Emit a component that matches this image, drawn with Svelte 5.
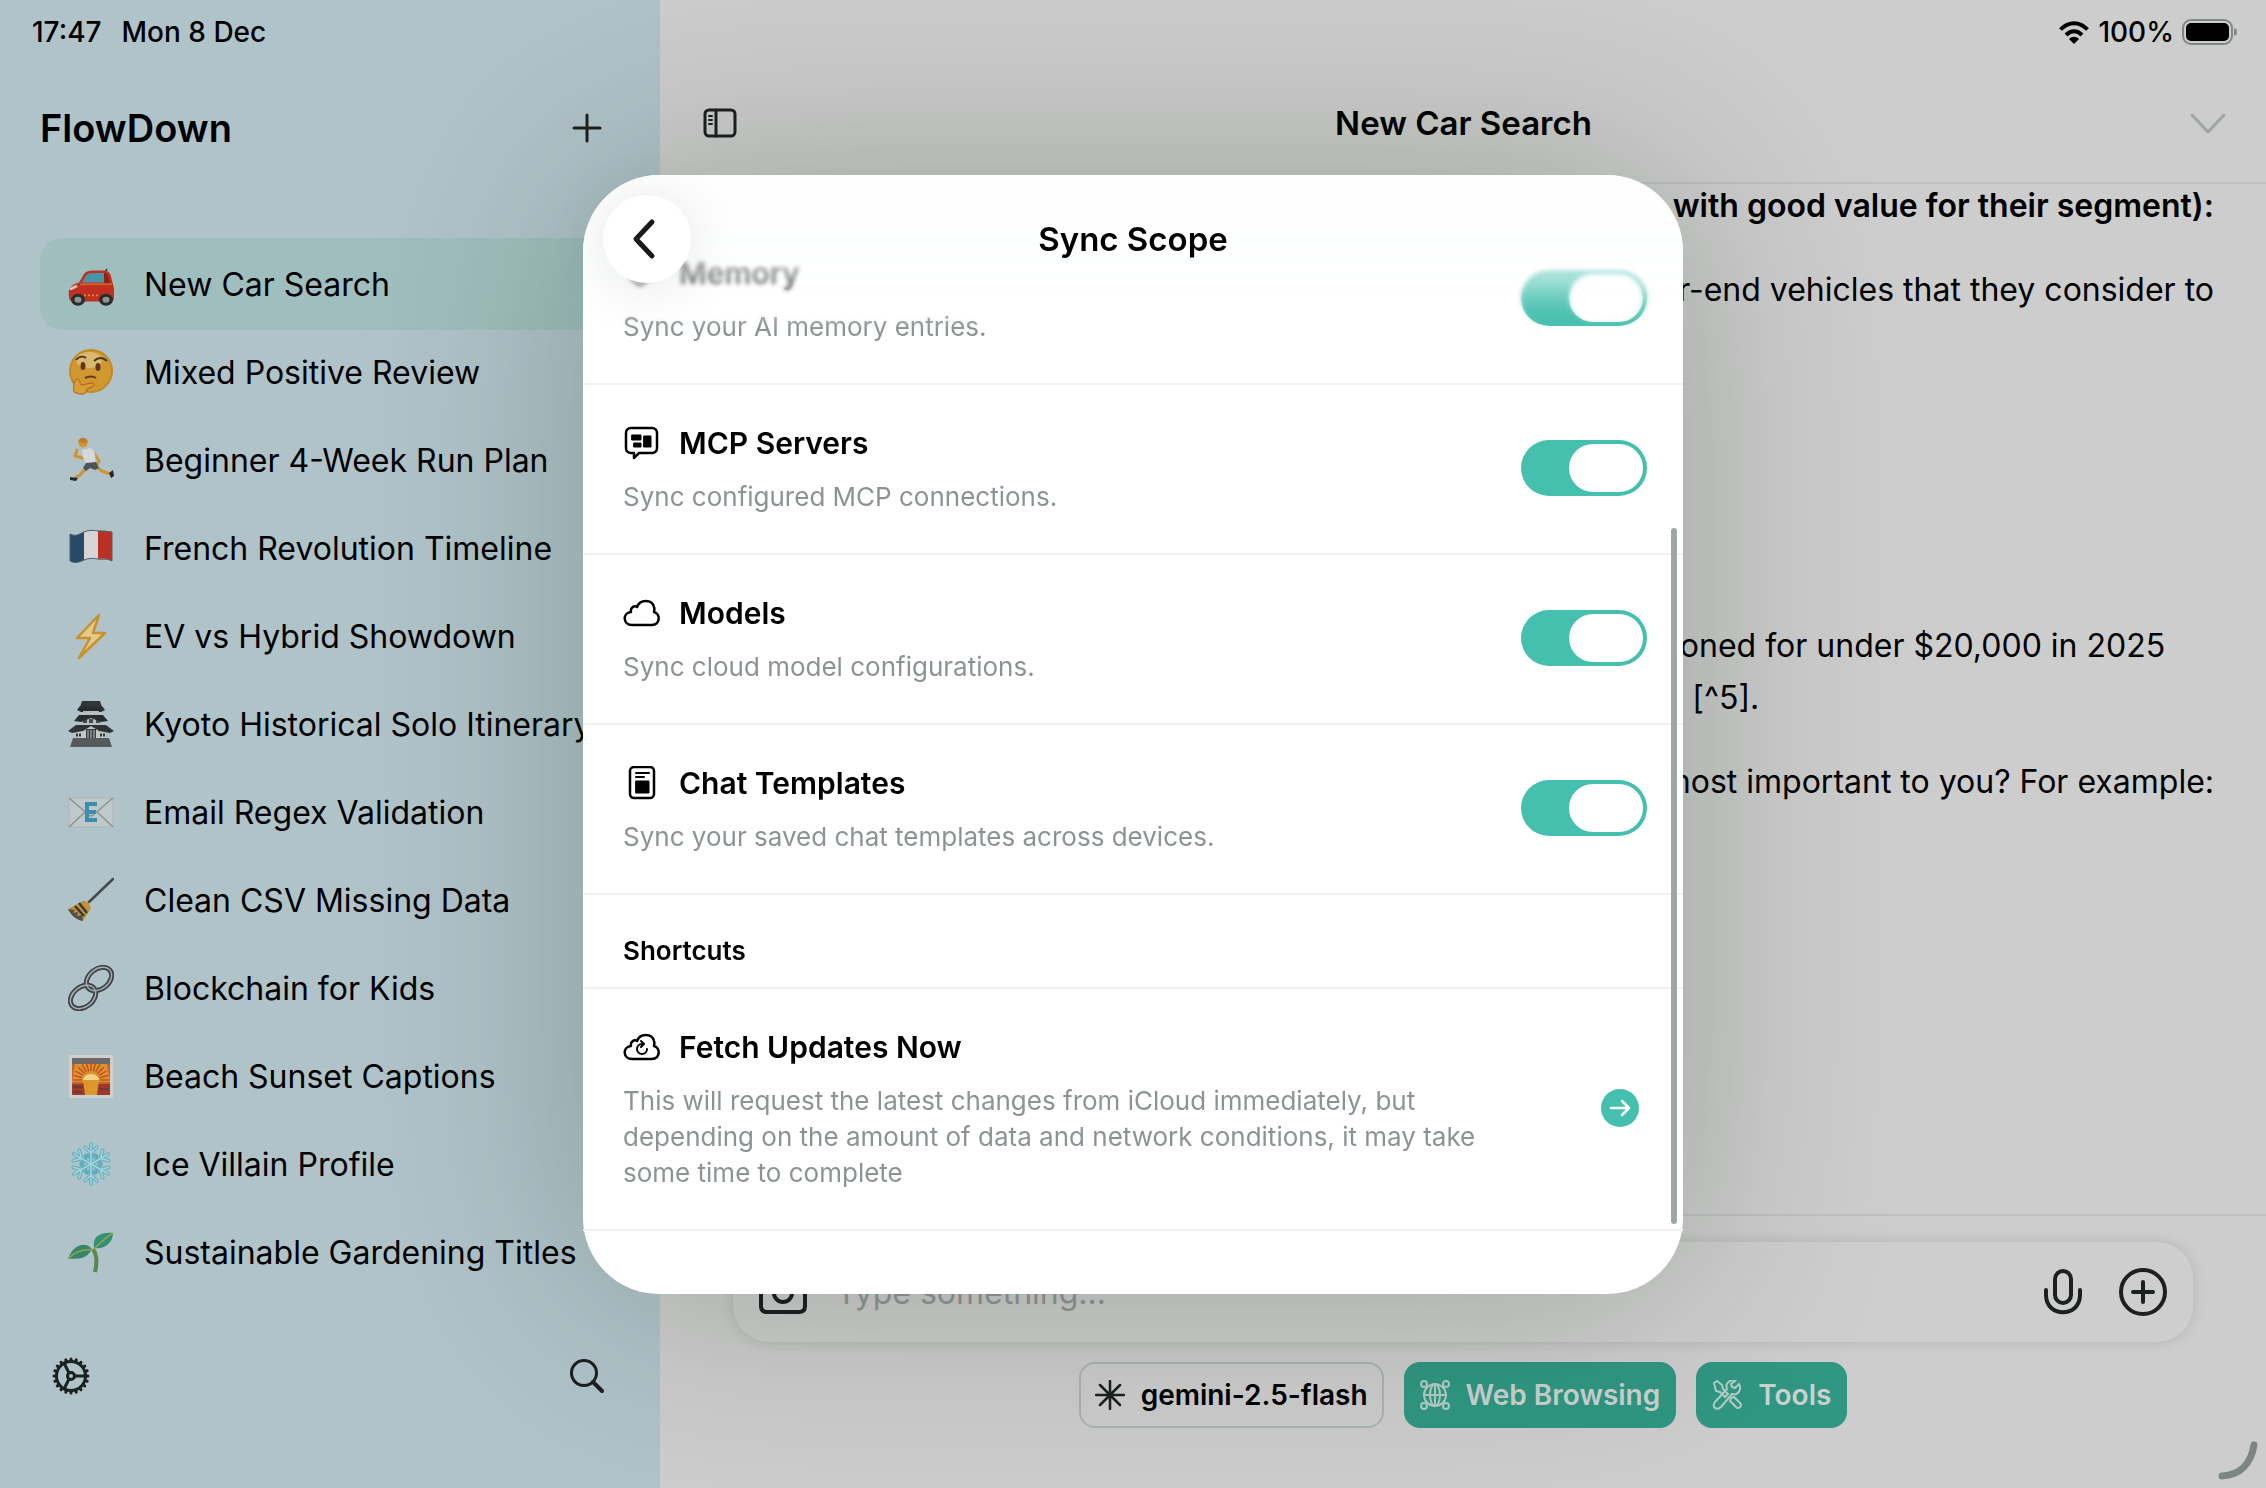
<script>
	// Data
	const chats = [
		{ icon: 'car', title: 'New Car Search' },
		{ icon: 'think', title: 'Mixed Positive Review' },
		{ icon: 'run', title: 'Beginner 4-Week Run Plan' },
		{ icon: 'flag', title: 'French Revolution Timeline' },
		{ icon: 'bolt', title: 'EV vs Hybrid Showdown' },
		{ icon: 'castle', title: 'Kyoto Historical Solo Itinerary' },
		{ icon: 'email', title: 'Email Regex Validation' },
		{ icon: 'broom', title: 'Clean CSV Missing Data' },
		{ icon: 'chain', title: 'Blockchain for Kids' },
		{ icon: 'sunset', title: 'Beach Sunset Captions' },
		{ icon: 'snow', title: 'Ice Villain Profile' },
		{ icon: 'plant', title: 'Sustainable Gardening Titles' }
	]

	let selected = $state(0)

	let scopes = $state([
		{ id: 'memory', title: 'Memory', text: 'Sync your AI memory entries.', on: true },
		{ id: 'mcp', title: 'MCP Servers', text: 'Sync configured MCP connections.', on: true },
		{ id: 'models', title: 'Models', text: 'Sync cloud model configurations.', on: true },
		{ id: 'templates', title: 'Chat Templates', text: 'Sync your saved chat templates across devices.', on: true }
	])

	const spokes = [0, 60, 120, 180, 240, 300]
	const teeth = Array.from({ length: 20 }, (_, i) => i * 18)
	const rays = Array.from({ length: 13 }, (_, i) => i * 15 - 90)
</script>

{#snippet emoji(name)}
	<svg class="emoji" viewBox="0 0 46 46" aria-hidden="true">
		{#if name === 'car'}
			<g transform="translate(0 6) scale(1 .86)">
				<path d="M36 8l3-6" stroke="#333" stroke-width="1.5" />
				<path d="M1 34c-1-8 1-13 10-16l5-10c2-3 5-4 9-4h10c5 0 7 2 8 7l3 14v11c0 3-2 4-4 4H5c-3 0-4-2-4-6z" fill="#c03020" />
				<path d="M14 18l4-8c1-2 3-3 6-3h11c3 0 4 2 5 6l1 5z" fill="#4c93a6" />
				<path d="M36 7c3 0 4 2 5 6l1 6h-6z" fill="#8b2418" />
				<path d="M12 20h32" stroke="#d5622f" stroke-width="2" />
				<path d="M2 26l7-4" stroke="#e0c9b0" stroke-width="3" />
				<path d="M16 33h16" stroke="#cf9531" stroke-width="2" stroke-dasharray="2 2" />
				<circle cx="10" cy="38" r="7" fill="#2a2d2e" /><circle cx="10" cy="38" r="3.5" fill="#8f9494" />
				<circle cx="38" cy="38" r="7" fill="#2a2d2e" /><circle cx="38" cy="38" r="3.5" fill="#8f9494" />
			</g>
		{:else if name === 'think'}
			<circle cx="23" cy="22" r="21" fill="#cf9930" stroke="#c28a25" stroke-width="2" />
			<ellipse cx="21" cy="11" rx="13" ry="8" fill="#e0cf9d" opacity=".6" />
			<path d="M8 11c3-4 7-4 10-2M26 12c4-4 9-4 13 0" fill="none" stroke="#503417" stroke-width="2" />
			<ellipse cx="15" cy="17" rx="2.5" ry="4" fill="#65341e" /><ellipse cx="30" cy="18" rx="2.5" ry="4" fill="#65341e" />
			<path d="M17 29c4-2 8-2 11 0" fill="none" stroke="#65341e" stroke-width="2" />
			<path d="M6 43c-1-6 0-12 3-13 3 0 3 5 4 6l11-2c3 0 3 3 0 4l-5 2c0 5-5 7-13 3z" fill="#d79f31" stroke="#bb5424" stroke-width="1" />
		{:else if name === 'run'}
			<path d="M15 21l-8-2 2-6M26 16l5 8-3 6" fill="none" stroke="#cf9331" stroke-width="3" stroke-linecap="round" stroke-linejoin="round" />
			<path d="M20 29l-8 9-5 3M27 29l7 5 8 3" fill="none" stroke="#cf9331" stroke-width="3" stroke-linejoin="round" />
			<path d="M14 13l8-2c5 1 6 8 5 15l-9 1-3-7z" fill="#d6d9da" />
			<path d="M18 26l10-1 3 6-4 2-5-2-4 3-3-3z" fill="#4e5557" />
			<circle cx="15" cy="6" r="4.5" fill="#ce9538" /><path d="M10 5c1-5 8-6 10 0l-3 1z" fill="#c47c22" />
			<path d="M2 40l8 1-2 3-6-1zM41 36l4-3 1 6-3 2z" fill="#26292b" />
		{:else if name === 'flag'}
			<path d="M2 9c6 3 9 0 14-2v28c-5 2-8 4-14 1z" fill="#264a68" />
			<path d="M16 7c5-2 9-2 14-1v28c-5-1-9-1-14 1z" fill="#d5d5d6" />
			<path d="M30 6c5-1 9 0 14 1v29c-5-3-9-3-14-2z" fill="#b93124" />
			<path d="M2 9c6 3 9 0 14-2s9-2 14-1 9 0 14 1v29M2 9v27c6 3 9 1 14-1s9-2 14-1 9-1 14 2" fill="none" stroke="#4d5f68" />
		{:else if name === 'bolt'}
			<path d="M31 2L9 25h13L11 45l26-25H25z" fill="#e0cb90" stroke="#c8912c" stroke-width="2.5" stroke-linejoin="round" />
		{:else if name === 'castle'}
			<path d="M5 37h36l3 9H2z" fill="#555b5d" />
			<path d="M8 27h30v10H8z" fill="#c3c7c8" /><path d="M18 28h10v9H18z" fill="#383e40" />
			<path d="M20 29v8M23 29v8M26 29v8" stroke="#bfc4c5" />
			<path d="M12 13h22v11H12z" fill="#bbbfc1" /><path d="M15 18h4v4h-4zM21 18h4v4h-4zM28 18h4v4h-4z" fill="#454c4f" />
			<path d="M0 30l8-6h30l8 6-4 2-11-2-8-5-8 5-11 2z" fill="#2e3436" />
			<path d="M6 20l5-6h24l5 6-7 1-10-4-10 4zM9 9l3-4h22l3 4-4 2H13z" fill="#272d2f" />
			<path d="M14 0h18l2 6H12z" fill="#303638" /><path d="M15 10h16v4H15z" fill="#b7bcbe" />
			<path d="M8 34h6M32 34h6" stroke="#31383a" stroke-width="3" stroke-dasharray="2 1" />
		{:else if name === 'email'}
			<path d="M1 9h44v29H1z" fill="#c0c8ca" stroke="#aeb5b7" />
			<path d="M1 9l20 17q2 2 4 0L45 9M1 38l16-15M45 38L29 23" fill="none" stroke="#899396" stroke-width="1.5" />
			<path d="M29 15H19v16h10M19 23h9" fill="none" stroke="#3b8ead" stroke-width="4" />
		{:else if name === 'broom'}
			<path d="M45 2L21 25" stroke="#444a4c" stroke-width="2.5" stroke-linecap="round" />
			<path d="M15 24c3-1 7 3 8 7l-8 13C9 43 3 38 0 32z" fill="#c49039" />
			<path d="M11 26l8 10M7 29l9 10" stroke="#343a3a" stroke-width="2.5" />
			<path d="M0 32l7 1-2 3 5-1-1 4 5-1 1 6C8 43 3 38 0 32z" fill="#53504a" />
		{:else if name === 'chain'}
			<g fill="none" stroke="#3d4346" stroke-width="5">
				<ellipse cx="31" cy="14" rx="14" ry="10" transform="rotate(-38 31 14)" />
				<ellipse cx="15" cy="32" rx="14" ry="10" transform="rotate(-38 15 32)" />
			</g>
			<g fill="none" stroke="#a5adb0" stroke-width="1.5">
				<ellipse cx="31" cy="14" rx="14" ry="10" transform="rotate(-38 31 14)" />
				<ellipse cx="15" cy="32" rx="14" ry="10" transform="rotate(-38 15 32)" />
			</g>
		{:else if name === 'sunset'}
			<path d="M1 2h44v43H1z" fill="#ced0d0" /><path d="M4 5h38v37H4z" fill="#c8612b" />
			<path d="M4 5h38v6H4z" fill="#6b6a6b" />
			<path d="M7 11h32l3 18H4z" fill="#dc9429" />
			<g stroke="#c2432c" stroke-width="1.3">
				{#each rays as angle}
					<path d="M23 18V9" transform="rotate({angle} 23 27)" />
				{/each}
			</g>
			<path d="M15 27a8 6 0 0 1 16 0z" fill="#f0d68b" />
			<path d="M4 31h38v11H4z" fill="#9b3a2b" /><path d="M15 27h16l-2 15H17z" fill="#dc962b" />
			<path d="M5 34h9M32 36h9M5 39h9" stroke="#623b35" stroke-width="1.5" />
		{:else if name === 'snow'}
			<g fill="none" stroke="#60aebd" stroke-width="3.5" stroke-linecap="round">
				{#each spokes as angle}
					<path d="M23 23V3M23 12l-6-6M23 12l6-6M23 17l-4-3M23 17l4-3" transform="rotate({angle} 23 23)" />
				{/each}
			</g>
			<g fill="none" stroke="#a4d5de" stroke-width="1.5" stroke-linecap="round">
				{#each spokes as angle}
					<path d="M23 23V3M23 12l-6-6M23 12l6-6" transform="rotate({angle} 23 23)" />
				{/each}
			</g>
		{:else if name === 'plant'}
			<path d="M25 20c4 6 4 15 2 23" fill="none" stroke="#57894b" stroke-width="4" />
			<path d="M24 20C18 12 5 15 0 30c8-1 18 2 24-10z" fill="#39856a" />
			<path d="M26 19C24 7 33 3 45 4c0 9-8 17-19 15z" fill="#349073" />
			<path d="M25 21C17 20 8 22 1 29M26 20c6-6 12-12 19-16" fill="none" stroke="#8fa452" stroke-width="1.5" />
		{/if}
	</svg>
{/snippet}

{#snippet rowIcon(name)}
	<svg class="row-icon" viewBox="0 0 38 34" aria-hidden="true">
		{#if name === 'memory'}
			<path d="M11 14c-5-4-2-11 4-10 3-4 9-3 10 1 6 0 7 7 3 10 3 6-2 10-6 9-1 6-8 6-9 1-5 0-7-6-2-11z" />
		{:else if name === 'mcp'}
			<path d="M8 2h21c3 0 5 2 5 5v15c0 3-2 5-5 5H16l-5 5v-5H8c-3 0-5-2-5-5V7c0-3 2-5 5-5z" />
			<path class="solid" d="M9 9h9v5H9zM21 10h7v11h-7zM11 17h7v4h-7z" />
		{:else if name === 'models'}
			<path d="M9 29c-9 0-10-12-1-13-1-4 3-7 6-5 3-8 15-8 17 0 1 2 0 4 0 5 7 2 6 13-2 13z" />
		{:else if name === 'templates'}
			<rect x="7" y="1" width="24" height="31" rx="4" />
			<path class="thin" d="M13 7h13M13 11h8" /><path class="solid" d="M13 15h13v12H13z" />
		{:else if name === 'fetch'}
			<path d="M9 29c-9 0-10-12-1-13-1-4 3-7 6-5 3-8 15-8 17 0 1 2 0 4 0 5 7 2 6 13-2 13z" />
			<path class="thin" d="M19 14a5 5 0 1 0 5 5M18 11l3 3-3 3" />
		{/if}
	</svg>
{/snippet}

<div class="app">
	<aside class="sidebar">
		<div class="status">
			<span>17:47</span>
			<span>Mon 8 Dec</span>
		</div>
		<div class="brand">
			<h1>FlowDown</h1>
			<button class="icon-button" aria-label="New chat">
				<svg width="32" height="32" viewBox="0 0 32 32"><path d="M16 3v26M3 16h26" /></svg>
			</button>
		</div>
		<nav class="chats">
			{#each chats as chat, i}
				<button class="chat" class:selected={selected === i} onclick={() => (selected = i)}>
					{@render emoji(chat.icon)}
					<span>{chat.title}</span>
				</button>
			{/each}
		</nav>
		<div class="sidebar-footer">
			<button class="icon-button" aria-label="Settings">
				<svg width="38" height="38" viewBox="0 0 38 38">
					<circle cx="19" cy="19" r="14.5" />
					<circle cx="19" cy="19" r="3.5" />
					<path d="M22.5 19h11M17 16l-5-10M17 22l-5 10" />
					{#each teeth as angle}
						<path d="M19 4V2" transform="rotate({angle} 19 19)" />
					{/each}
				</svg>
			</button>
			<button class="icon-button" aria-label="Search">
				<svg width="38" height="38" viewBox="0 0 38 38">
					<circle cx="16" cy="16" r="12.5" />
					<path d="M25 25l9 9" stroke-width="4" />
				</svg>
			</button>
		</div>
	</aside>

	<main class="main">
		<div class="status status-right">
			<svg width="32" height="24" viewBox="0 0 32 24" aria-hidden="true">
				<path d="M2.5 9.5c8-8.5 19-8.5 27 0M8 15c5-5 11-5 16 0" fill="none" stroke="#000" stroke-width="4" />
				<path d="M16 24l-5-5c3-3 7-3 10 0z" />
			</svg>
			<span>100%</span>
			<svg width="56" height="26" viewBox="0 0 56 26" aria-hidden="true">
				<rect x="1" y="1" width="49" height="24" rx="8" fill="none" stroke="#808886" stroke-width="2" />
				<rect x="4" y="4" width="43" height="18" rx="5" />
				<path d="M52 9c4 1 4 7 0 8z" fill="#808886" />
			</svg>
		</div>
		<header class="toolbar">
			<button class="icon-button" aria-label="Toggle sidebar">
				<svg width="34" height="30" viewBox="0 0 34 30">
					<rect x="2" y="2" width="30" height="26" rx="4" />
					<path d="M13 2v26" />
					<path d="M6 8h3M6 12h3M6 16h3" stroke-width="2" />
				</svg>
			</button>
			<h2>New Car Search</h2>
			<button class="icon-button faint" aria-label="Chat options">
				<svg width="36" height="24" viewBox="0 0 36 24"><path d="M2 4l16 17L34 4" /></svg>
			</button>
		</header>

		<div class="messages">
			<p><strong>with good value for their segment):</strong></p>
			<p>lower-end vehicles that they consider to</p>
			<p class="later">mentioned for under $20,000 in 2025<br />range [^5].</p>
			<p>most important to you? For example:</p>
		</div>

		<footer class="composer">
			<div class="field">
				<button class="icon-button" aria-label="Camera">
					<svg width="50" height="46" viewBox="0 0 50 46">
						<path d="M9 8h6l4-5h12l4 5h6c4 0 6 2 6 6v23c0 4-2 6-6 6H9c-4 0-6-2-6-6V14c0-4 2-6 6-6z" />
						<circle cx="25" cy="24" r="9" />
					</svg>
				</button>
				<input type="text" aria-label="Message" placeholder="Type something..." />
				<button class="icon-button" aria-label="Dictate">
					<svg width="48" height="48" viewBox="0 0 48 48">
						<rect x="13" y="3" width="16" height="32" rx="8" />
						<path d="M4 22v5c0 23 34 23 34 0v-5" />
					</svg>
				</button>
				<button class="icon-button" aria-label="Add attachment">
					<svg width="50" height="50" viewBox="0 0 50 50">
						<circle cx="25" cy="25" r="22" />
						<path d="M25 15v20M15 25h20" />
					</svg>
				</button>
			</div>
			<div class="chips">
				<button class="chip">
					<svg width="30" height="30" viewBox="0 0 30 30" aria-hidden="true">
						<path d="M15 1v28M1 15h28M5 5l20 20M25 5L5 25" />
					</svg>
					gemini-2.5-flash
				</button>
				<button class="chip on">
					<svg width="30" height="30" viewBox="0 0 30 30" aria-hidden="true">
						<circle cx="15" cy="15" r="11" />
						<ellipse cx="15" cy="15" rx="5" ry="11" />
						<path d="M4 15h22M15 4v22" />
						<g class="knot">
							<circle cx="4" cy="4" r="3" /><circle cx="26" cy="4" r="3" />
							<circle cx="4" cy="26" r="3" /><circle cx="26" cy="26" r="3" />
						</g>
					</svg>
					Web Browsing
				</button>
				<button class="chip on">
					<svg width="30" height="30" viewBox="0 0 30 30" aria-hidden="true">
						<path d="M2 3l3-2 5 4 1 4 5 5-3 3-5-5-4-1zM19 18l3-1 6 6c3 3-2 7-4 4l-6-6z" />
						<path d="M27 4l-4 4-3-1-1-3 4-3c-6-2-10 3-8 8L3 22c-4 5 2 9 6 5l11-13c6 2 10-5 7-10z" />
					</svg>
					Tools
				</button>
			</div>
		</footer>
		<svg class="corner" width="44" height="44" viewBox="0 0 44 44" aria-hidden="true">
			<path d="M4 36C22 35 33 24 36 5" />
		</svg>
	</main>
</div>

<div class="overlay">
	<div class="modal" role="dialog" aria-labelledby="sheet-title">
		<div class="sheet">
			{#each scopes as scope}
				<div class="row">
					<div class="row-text">
						<label class="row-title" for={scope.id}>
							{@render rowIcon(scope.id)}
							{scope.title}
						</label>
						<p>{scope.text}</p>
					</div>
					<input class="switch" type="checkbox" role="switch" id={scope.id} bind:checked={scope.on} />
				</div>
			{/each}
			<h3>Shortcuts</h3>
			<div class="row">
				<div class="row-text">
					<div class="row-title">
						{@render rowIcon('fetch')}
						Fetch Updates Now
					</div>
					<p>This will request the latest changes from iCloud immediately, but depending on the amount of data and network conditions, it may take some time to complete</p>
				</div>
				<button class="go" aria-label="Fetch Updates Now">
					<svg width="38" height="38" viewBox="0 0 38 38">
						<path d="M10 19h18M21 12l7 7-7 7" />
					</svg>
				</button>
			</div>
		</div>
		<div class="fade"></div>
		<div class="modal-header">
			<button class="back" aria-label="Back">
				<svg width="40" height="44" viewBox="0 0 40 44"><path d="M25 5L9 22l16 17" /></svg>
			</button>
			<h2 id="sheet-title">Sync Scope</h2>
		</div>
		<div class="scrollbar"></div>
	</div>
</div>

<style>
	:global(body) {
		margin: 0;
		background: #cdcdcd;
		font-family: Inter, "Liberation Sans", sans-serif;
		color: #000;
	}

	h1, h2, h3, p {
		margin: 0;
	}

	h1, h2, h3, strong {
		font-weight: 600;
	}

	button {
		padding: 0;
		border: 0;
		background: none;
		font: inherit;
		color: inherit;
	}

	svg {
		display: block;
		flex: none;
	}

	.app {
		display: grid;
		grid-template-columns: 660px 1fr;
		min-height: 100vh;
	}

	.status {
		display: flex;
		align-items: center;
		gap: 20px;
		height: 64px;
		padding: 0 32px;
		font-size: 28px;
		font-weight: 500;
	}

	.status-right {
		justify-content: flex-end;
		gap: 8px;
		padding-right: 28px;
	}

	.icon-button svg {
		fill: none;
		stroke: #1c2020;
		stroke-width: 3;
		stroke-linecap: round;
		stroke-linejoin: round;
	}

	.icon-button.faint svg {
		stroke: #9da5a5;
	}

	/* Sidebar */
	.sidebar {
		display: flex;
		flex-direction: column;
		background: #b0c3c9;
	}

	.brand {
		display: flex;
		align-items: center;
		justify-content: space-between;
		height: 128px;
		padding: 0 57px 0 40px;
	}

	.brand h1 {
		font-size: 38px;
	}

	.chats {
		flex: 1;
		padding: 46px 40px 0;
	}

	.chat {
		display: flex;
		align-items: center;
		gap: 30px;
		width: 100%;
		height: 92px;
		margin-bottom: -4px;
		padding-left: 28px;
		border-radius: 22px;
		font-size: 32px;
		white-space: nowrap;
	}

	.chat.selected {
		background: #9fbebd;
	}

	.emoji {
		width: 46px;
		height: 46px;
	}

	.sidebar-footer {
		display: flex;
		justify-content: space-between;
		padding: 0 54px 93px 52px;
	}

	/* Chat pane */
	.main {
		position: relative;
		display: flex;
		flex-direction: column;
		background: #cdcdcd;
	}

	.toolbar {
		display: flex;
		align-items: center;
		justify-content: space-between;
		height: 118px;
		padding: 0 40px 0 43px;
		border-bottom: 2px solid #bfc0c0;
	}

	.toolbar h2 {
		font-size: 33px;
	}

	.messages {
		align-self: flex-end;
		flex: 1;
		width: 618px;
		margin-top: -4px;
		padding-right: 52px;
		font-size: 32px;
		line-height: 52px;
		text-align: right;
		white-space: nowrap;
	}

	.messages p {
		margin-bottom: 32px;
	}

	.messages .later {
		margin-top: 304px;
		text-align: left;
	}

	.composer {
		padding: 26px 73px 60px;
		border-top: 2px solid #bfc0c0;
	}

	.field {
		display: flex;
		align-items: center;
		gap: 28px;
		height: 100px;
		padding: 0 25px;
		border-radius: 36px;
		background: #cecece;
		box-shadow: 0 0 14px rgba(0, 0, 0, .12);
	}

	.field .icon-button svg {
		stroke-width: 4;
	}

	.field input {
		flex: 1;
		min-width: 0;
		padding: 0;
		border: 0;
		background: none;
		font: inherit;
		font-size: 32px;
	}

	.field input::placeholder {
		color: #939799;
		opacity: 1;
	}

	.chips {
		display: flex;
		justify-content: center;
		gap: 20px;
		padding-top: 20px;
	}

	.chip {
		display: flex;
		align-items: center;
		gap: 16px;
		box-sizing: border-box;
		height: 66px;
		padding: 0 14px;
		border: 2px solid #aab5b3;
		border-radius: 16px;
		font-size: 28px;
		font-weight: 600;
	}

	.chip svg {
		fill: none;
		stroke: #1c2020;
		stroke-width: 2.5;
		stroke-linecap: round;
	}

	.chip.on {
		border-color: #309782;
		background: #309782;
		color: #c9d2d0;
	}

	.chip.on svg {
		stroke: #b3cdc7;
		stroke-width: 2;
	}

	.chip .knot {
		fill: #309782;
	}

	.corner {
		position: absolute;
		right: 4px;
		bottom: 4px;
		fill: none;
		stroke: #7e8585;
		stroke-width: 7;
		stroke-linecap: round;
	}

	/* Sync sheet */
	.overlay {
		position: fixed;
		inset: 0;
		display: grid;
		place-items: center;
		padding-bottom: 20px;
		overflow: hidden;
	}

	.modal {
		position: relative;
		width: 1100px;
		max-width: 100%;
		border-radius: 76px;
		background: #fff;
		box-shadow: 0 0 220px rgba(10, 30, 0, .24);
	}

	.sheet {
		padding: 40px 0 63px;
	}

	.row {
		display: flex;
		align-items: center;
		justify-content: space-between;
		padding: 37px 36px 38px 40px;
		border-bottom: 2px solid #f2f2f2;
	}

	.row-text {
		max-width: 860px;
	}

	.row-title {
		display: flex;
		align-items: center;
		gap: 18px;
		height: 42px;
		margin-bottom: 15px;
		font-size: 30px;
		font-weight: 600;
	}

	.row-text p {
		font-size: 26px;
		line-height: 36px;
		color: #8d9393;
	}

	.row-icon {
		width: 38px;
		height: 34px;
		fill: none;
		stroke: #000;
		stroke-width: 2.5;
		stroke-linecap: round;
		stroke-linejoin: round;
	}

	.row-icon .solid {
		fill: #000;
		stroke-width: 1;
	}

	.row-icon .thin {
		stroke-width: 2;
	}

	.sheet h3 {
		height: 54px;
		padding: 38px 40px 0;
		border-bottom: 2px solid #f2f2f2;
		font-size: 26px;
		line-height: 36px;
	}

	.switch {
		appearance: none;
		flex: none;
		display: flex;
		align-items: center;
		box-sizing: border-box;
		width: 126px;
		height: 56px;
		margin: 0;
		padding: 0 4px;
		border-radius: 28px;
		background: #c9cdcd;
	}

	.switch::before {
		content: "";
		width: 74px;
		height: 48px;
		border-radius: 24px;
		background: #fff;
	}

	.switch:checked {
		justify-content: flex-end;
		background: #45bfae;
	}

	.go {
		margin-right: 8px;
		border-radius: 50%;
		background: #45bfae;
	}

	.go svg {
		fill: none;
		stroke: #fff;
		stroke-width: 2.5;
		stroke-linecap: round;
		stroke-linejoin: round;
	}

	.fade {
		position: absolute;
		inset: 0 0 auto;
		height: 156px;
		border-radius: 76px 76px 0 0;
		background: linear-gradient(rgba(253, 255, 254, .9) 40%, rgba(255, 255, 255, 0));
		backdrop-filter: blur(2px);
		mask-image: linear-gradient(#000 70%, transparent);
	}

	.modal-header {
		position: absolute;
		inset: 0 0 auto;
		display: grid;
		grid-template-columns: 88px 1fr 88px;
		align-items: center;
		height: 128px;
		padding: 0 20px;
		text-align: center;
	}

	.modal-header h2 {
		font-size: 33px;
	}

	.back {
		display: grid;
		place-items: center;
		width: 88px;
		height: 88px;
		border-radius: 50%;
		background: #fff;
		box-shadow: 0 4px 60px rgba(0, 0, 0, .1);
	}

	.back svg {
		fill: none;
		stroke: #1a1a1a;
		stroke-width: 5;
		stroke-linecap: round;
		stroke-linejoin: round;
	}

	.scrollbar {
		position: absolute;
		top: 353px;
		right: 6px;
		bottom: 70px;
		width: 6px;
		border-radius: 3px;
		background: #9fa6a6;
	}
</style>
